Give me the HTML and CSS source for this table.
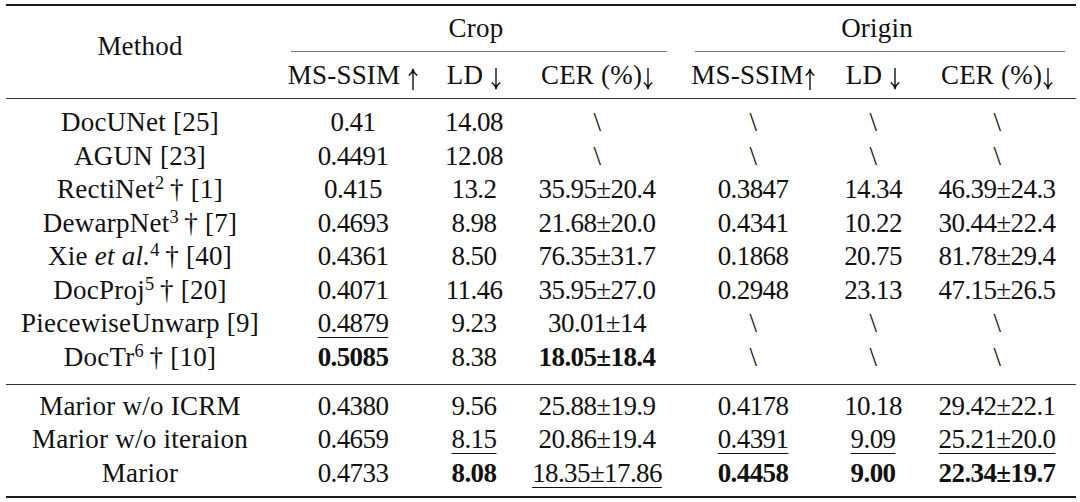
FILE: index.html
```html
<!DOCTYPE html>
<html lang="en">
<head>
<meta charset="utf-8">
<title>Results table</title>
<link rel="stylesheet" href="styles.css">
</head>
<body>
<div class="wrap">
<table class="results">
  <colgroup>
    <col class="c-method"><col class="c-ssim"><col class="c-ld"><col class="c-cer">
    <col class="c-ssim2"><col class="c-ld2"><col class="c-cer2">
  </colgroup>
  <thead>
    <tr class="h1">
      <th rowspan="2" class="method-head"><span class="txt">Method</span></th>
      <th colspan="3" class="group"><div class="glabel txt">Crop</div><div class="cmid"></div></th>
      <th colspan="3" class="group"><div class="glabel txt">Origin</div><div class="cmid"></div></th>
    </tr>
    <tr class="h2">
      <th class="txt">MS-SSIM <svg class="arr" viewBox="0 0 10 22" aria-label="up"><path d="M5 1.5V22M1.2 7.2Q4.2 5.2 5 1.2Q5.8 5.2 8.8 7.2"/></svg></th>
      <th class="txt">LD <svg class="arr" viewBox="0 0 10 22" aria-label="down"><path d="M5 0V20.5M1.2 14.8Q4.2 16.8 5 20.8Q5.8 16.8 8.8 14.8"/></svg></th>
      <th class="txt">CER (%)<svg class="arr" viewBox="0 0 10 22" aria-label="down"><path d="M5 0V20.5M1.2 14.8Q4.2 16.8 5 20.8Q5.8 16.8 8.8 14.8"/></svg></th>
      <th class="txt">MS-SSIM<svg class="arr" viewBox="0 0 10 22" aria-label="up"><path d="M5 1.5V22M1.2 7.2Q4.2 5.2 5 1.2Q5.8 5.2 8.8 7.2"/></svg></th>
      <th class="txt">LD <svg class="arr" viewBox="0 0 10 22" aria-label="down"><path d="M5 0V20.5M1.2 14.8Q4.2 16.8 5 20.8Q5.8 16.8 8.8 14.8"/></svg></th>
      <th class="txt">CER (%)<svg class="arr" viewBox="0 0 10 22" aria-label="down"><path d="M5 0V20.5M1.2 14.8Q4.2 16.8 5 20.8Q5.8 16.8 8.8 14.8"/></svg></th>
    </tr>
  </thead>
  <tbody class="sec1">
    <tr class="first">
      <td class="name">DocUNet [25]</td>
      <td class="num">0.41</td><td class="num">14.08</td><td class="num">\</td>
      <td class="num">\</td><td class="num">\</td><td class="num">\</td>
    </tr>
    <tr>
      <td class="name">AGUN [23]</td>
      <td class="num">0.4491</td><td class="num">12.08</td><td class="num">\</td>
      <td class="num">\</td><td class="num">\</td><td class="num">\</td>
    </tr>
    <tr>
      <td class="name">RectiNet<sup>2</sup>&#8201;† [1]</td>
      <td class="num">0.415</td><td class="num">13.2</td><td class="num">35.95±20.4</td>
      <td class="num">0.3847</td><td class="num">14.34</td><td class="num">46.39±24.3</td>
    </tr>
    <tr>
      <td class="name">DewarpNet<sup>3</sup>&#8201;† [7]</td>
      <td class="num">0.4693</td><td class="num">8.98</td><td class="num">21.68±20.0</td>
      <td class="num">0.4341</td><td class="num">10.22</td><td class="num">30.44±22.4</td>
    </tr>
    <tr>
      <td class="name">Xie <i>et al.</i><sup>4</sup>&#8201;† [40]</td>
      <td class="num">0.4361</td><td class="num">8.50</td><td class="num">76.35±31.7</td>
      <td class="num">0.1868</td><td class="num">20.75</td><td class="num">81.78±29.4</td>
    </tr>
    <tr>
      <td class="name">DocProj<sup>5</sup>&#8201;† [20]</td>
      <td class="num">0.4071</td><td class="num">11.46</td><td class="num">35.95±27.0</td>
      <td class="num">0.2948</td><td class="num">23.13</td><td class="num">47.15±26.5</td>
    </tr>
    <tr>
      <td class="name">PiecewiseUnwarp [9]</td>
      <td class="num"><span class="second">0.4879</span></td><td class="num">9.23</td><td class="num">30.01±14</td>
      <td class="num">\</td><td class="num">\</td><td class="num">\</td>
    </tr>
    <tr class="last">
      <td class="name">DocTr<sup>6</sup>&#8201;† [10]</td>
      <td class="num"><b>0.5085</b></td><td class="num">8.38</td><td class="num"><b>18.05±18.4</b></td>
      <td class="num">\</td><td class="num">\</td><td class="num">\</td>
    </tr>
  </tbody>
  <tbody class="sec2">
    <tr class="first">
      <td class="name">Marior w/o ICRM</td>
      <td class="num">0.4380</td><td class="num">9.56</td><td class="num">25.88±19.9</td>
      <td class="num">0.4178</td><td class="num">10.18</td><td class="num">29.42±22.1</td>
    </tr>
    <tr>
      <td class="name">Marior w/o iteraion</td>
      <td class="num">0.4659</td><td class="num"><span class="second">8.15</span></td><td class="num">20.86±19.4</td>
      <td class="num"><span class="second">0.4391</span></td><td class="num"><span class="second">9.09</span></td><td class="num"><span class="second">25.21±20.0</span></td>
    </tr>
    <tr class="last">
      <td class="name">Marior</td>
      <td class="num">0.4733</td><td class="num"><b>8.08</b></td><td class="num"><span class="second">18.35±17.86</span></td>
      <td class="num"><b>0.4458</b></td><td class="num"><b>9.00</b></td><td class="num"><b>22.34±19.7</b></td>
    </tr>
  </tbody>
</table>
</div>
</body>
</html>
```

FILE: styles.css
```css
html, body {
  margin: 0;
  padding: 0;
  background: #ffffff;
}

body {
  font-family: "Liberation Serif", "Times New Roman", serif;
  font-size: 27px;
  color: #111111;
}

.wrap {
  padding: 4px 0 0 6px;
}

.results {
  border-collapse: separate;
  border-spacing: 0;
  table-layout: fixed;
  width: 1070px;
  border-top: 2px solid #1a1a1a;
  border-bottom: 2px solid #1a1a1a;
}

.c-method { width: 268px; }
.c-ssim { width: 158px; }
.c-ld { width: 84px; }
.c-cer { width: 162px; }
.c-ssim2 { width: 150px; }
.c-ld2 { width: 90px; }
.c-cer2 { width: 158px; }

.results th,
.results td {
  padding: 0;
  text-align: center;
  white-space: nowrap;
  font-weight: normal;
}

.txt {
  letter-spacing: 0.2px;
}

.arr {
  width: 10px;
  height: 22px;
  vertical-align: -6px;
  margin-left: 1px;
}

.arr path {
  fill: none;
  stroke: #111111;
  stroke-width: 1.4;
  stroke-linecap: round;
  stroke-linejoin: round;
}

.method-head {
  vertical-align: middle;
  line-height: 45px;
  padding-bottom: 12px !important;
  border-bottom: 1px solid #333333;
}

.group {
  vertical-align: top;
}

.glabel {
  line-height: 45px;
}

.cmid {
  height: 1px;
  background: #7a7a7a;
  margin: 0 11px 0 17px;
}

.h2 th {
  line-height: 46px;
  border-bottom: 1px solid #333333;
}

.results td {
  line-height: 33.5px;
}

.name {
  letter-spacing: 0.25px;
}

.num {
  letter-spacing: -0.6px;
}

.sec1 .first td { padding-top: 7px; }
.sec1 .last td {
  padding-bottom: 9.5px;
  border-bottom: 1px solid #333333;
}

.sec2 .first td { padding-top: 5.25px; }
.sec2 .last td { padding-bottom: 6px; }

sup {
  font-size: 0.68em;
  line-height: 0;
  vertical-align: 0.5em;
  letter-spacing: 0;
}

.second {
  text-decoration: underline;
  text-decoration-thickness: 1px;
  text-underline-offset: 5px;
}

b {
  font-weight: bold;
}
```
